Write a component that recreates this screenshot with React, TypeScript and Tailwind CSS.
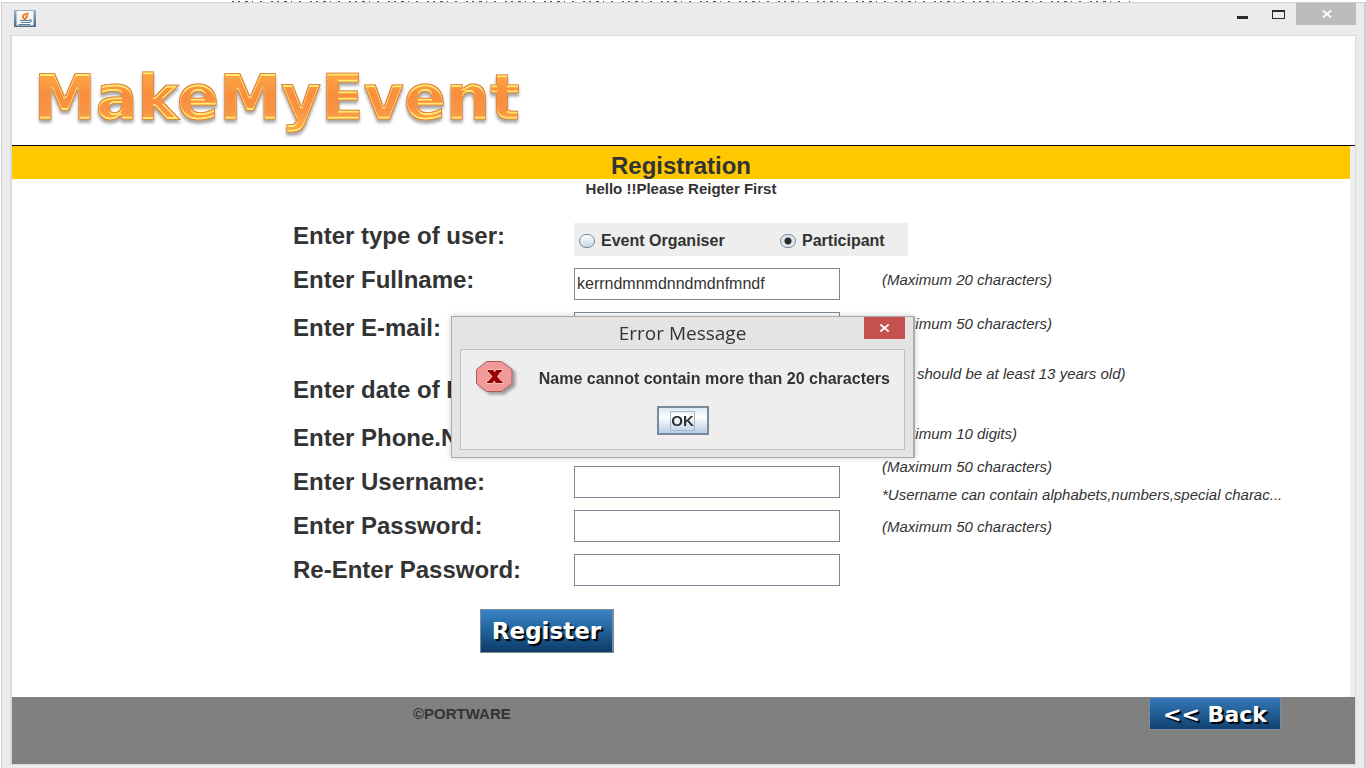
import React, { useState } from "react";

type Row = {
  id: string;
  label: string;
  type: string;
  value?: string;
  hints: string[];
  rowClass: string;
  labelClass: string;
  hintClass: string;
};

const rows: Row[] = [
  {
    id: "fullname",
    label: "Enter Fullname:",
    type: "text",
    value: "kerrndmnmdnndmdnfmndf",
    hints: ["(Maximum 20 characters)"],
    rowClass: "h-8",
    labelClass: "items-center pb-2",
    hintClass: "justify-center pb-2",
  },
  {
    id: "email",
    label: "Enter E-mail:",
    type: "email",
    hints: ["(Maximum 50 characters)"],
    rowClass: "h-8",
    labelClass: "items-center",
    hintClass: "justify-center pb-2",
  },
  {
    id: "birth",
    label: "Enter date of Birth:",
    type: "text",
    hints: ["(You should be at least 13 years old)"],
    rowClass: "h-[54px]",
    labelClass: "items-end pb-1.5",
    hintClass: "justify-start pt-2.5",
  },
  {
    id: "phone",
    label: "Enter Phone.No:",
    type: "tel",
    hints: ["(Maximum 10 digits)"],
    rowClass: "h-8",
    labelClass: "items-center",
    hintClass: "justify-center pb-2",
  },
  {
    id: "username",
    label: "Enter Username:",
    type: "text",
    hints: [
      "(Maximum 50 characters)",
      "*Username can contain alphabets,numbers,special charac...",
    ],
    rowClass: "h-8",
    labelClass: "items-center",
    hintClass: "justify-center gap-3 pb-0.5",
  },
  {
    id: "password",
    label: "Enter Password:",
    type: "password",
    hints: ["(Maximum 50 characters)"],
    rowClass: "h-8",
    labelClass: "items-center",
    hintClass: "justify-center pt-0.5",
  },
  {
    id: "repeat",
    label: "Re-Enter Password:",
    type: "password",
    hints: [],
    rowClass: "h-8",
    labelClass: "items-center",
    hintClass: "justify-center",
  },
];

function JavaIcon() {
  return (
    <svg width="22" height="17" viewBox="0 0 22 17" aria-hidden="true">
      <defs>
        <linearGradient id="cupFrame" x1="0" y1="0" x2="0" y2="1">
          <stop offset="0" stopColor="#9db3c8" />
          <stop offset="1" stopColor="#48667f" />
        </linearGradient>
      </defs>
      <rect width="22" height="17" rx="1" fill="url(#cupFrame)" />
      <rect x="2.5" y="1" width="17" height="14.5" fill="#f4f6f9" />
      <path d="M14.500 3.500C8 4.500 7.500 7 11 9.500M14 5.500C11.500 6.500 13 7.500 11 9.500" fill="none" stroke="#ee7f22" strokeWidth="1.900" />
      <path d="M6 10.500h9M7 12.500h8M4.500 14.500h12" stroke="#5b7f9f" strokeWidth="1" />
      <path d="M15 10c3-1 3 2 0 2.500" fill="none" stroke="#5b7f9f" strokeWidth="1.200" />
    </svg>
  );
}

function Cross({ size }: { size: number }) {
  return (
    <svg width={size} height="8" viewBox="0 0 10 8" aria-hidden="true">
      <path d="M0.800 0.500L9.200 7.500M9.200 0.500L0.800 7.500" stroke="#fff" strokeWidth="1.800" />
    </svg>
  );
}

function ErrorIcon() {
  return (
    <svg width="42" height="36" viewBox="0 0 42 36" aria-hidden="true">
      <defs>
        <filter id="signShadow" x="-20%" y="-20%" width="150%" height="150%">
          <feDropShadow dx="3" dy="2.500" stdDeviation="1.500" floodColor="#000" floodOpacity="0.350" />
        </filter>
      </defs>
      <path
        d="M10.500 0.500h15L36 8.500v14L25.500 30.500H10.500L0.500 22.500v-14z"
        fill="#f09a9a"
        stroke="#a85a5a"
        filter="url(#signShadow)"
      />
      <path
        d="M11 8.500h6.500l1.200 2L20 8.500h6.500V11H25l-3.500 4.500L25.500 20H27v2.500h-7.500l-1.200-2.500-1.800 2.500H10.500V20H12l4-4.500-4-4.500h-1z"
        fill="#990000"
        stroke="#ffc0c0"
        strokeWidth="1"
      />
    </svg>
  );
}

function Logo() {
  return (
    <>
      <svg width="0" height="0" className="absolute" aria-hidden="true">
        <filter id="bevel" x="-5%" y="-10%" width="110%" height="130%" colorInterpolationFilters="sRGB">
          <feMorphology in="SourceAlpha" operator="erode" radius="1" result="inner" />
          <feOffset in="inner" dy="2" result="down" />
          <feOffset in="inner" dy="-2" result="up" />
          <feComposite in="inner" in2="down" operator="out" result="topEdge" />
          <feComposite in="inner" in2="up" operator="out" result="bottomEdge" />
          <feMerge result="edges">
            <feMergeNode in="topEdge" />
            <feMergeNode in="bottomEdge" />
          </feMerge>
          <feGaussianBlur in="edges" stdDeviation="0.6" result="soft" />
          <feFlood floodColor="#fff06e" floodOpacity="0.95" />
          <feComposite in2="soft" operator="in" result="glint" />
          <feComposite in="glint" in2="inner" operator="in" result="glintIn" />
          <feGaussianBlur in="SourceAlpha" stdDeviation="1.8" />
          <feOffset dx="0" dy="3" result="far" />
          <feFlood floodColor="#000" floodOpacity="0.35" />
          <feComposite in2="far" operator="in" result="shade" />
          <feMerge>
            <feMergeNode in="shade" />
            <feMergeNode in="SourceGraphic" />
            <feMergeNode in="glintIn" />
          </feMerge>
        </filter>
      </svg>
      <h1 className="bg-[linear-gradient(180deg,#fda043_22%,#f98e3d_45%,#fa9344_68%,#fda548_82%)] bg-clip-text font-['DejaVu_Sans'] text-[62px] leading-[72px] font-bold text-transparent [filter:url(#bevel)] [-webkit-text-stroke:1px_#d98a48]">
        MakeMyEvent
      </h1>
    </>
  );
}

function Radio({ label, checked, onPick }: { label: string; checked: boolean; onPick: () => void }) {
  return (
    <label className="flex items-center gap-1.5 text-[16px] leading-5 font-bold">
      <input
        type="radio"
        name="userType"
        checked={checked}
        onChange={onPick}
        className="h-3.5 w-4 appearance-none rounded-full border border-[#7a8a99] bg-[linear-gradient(180deg,#ffffff,#c5d7e8)] checked:bg-[radial-gradient(circle,#2a2a2a_0_3px,#dbe6f0_4px)]"
      />
      {label}
    </label>
  );
}

export default function App() {
  const [userType, setUserType] = useState("participant");
  const [open, setOpen] = useState(true);

  return (
    <div className="flex min-h-screen flex-col bg-white font-['Liberation_Sans',sans-serif] text-[#333333]">
      <svg className="h-0.5 w-full" aria-hidden="true">
        <line x1="232" x2="1130" y1="1.500" y2="1.500" stroke="#4c5560" strokeDasharray="2 4 2 5 3 4 1 7 2 9" />
      </svg>
      <div className="ml-px flex flex-1 flex-col border-t border-r-2 border-l border-[#d0d0d0] bg-[#ebebeb] pr-2 pl-2">
        <header className="flex h-8 items-start justify-between">
          <div className="pt-[7px] pl-1">
            <JavaIcon />
          </div>
          <div className="flex items-start">
            <button type="button" aria-label="Minimize" className="flex h-[22px] w-9 items-center justify-center pt-1.5">
              <span className="h-[3px] w-[11px] bg-[#2a2a2a]" />
            </button>
            <button type="button" aria-label="Maximize" className="flex h-[22px] w-9 items-center justify-center">
              <span className="h-[9px] w-[13px] border border-t-2 border-[#2a2a2a]" />
            </button>
            <button type="button" aria-label="Close window" className="flex h-[22px] w-[60px] items-center justify-center bg-[#bcbcbc] pl-0.5">
              <Cross size={10} />
            </button>
          </div>
        </header>

        <main className="mb-[3px] flex flex-1 flex-col border border-l-2 border-[#dadada] bg-white">
          <div className="flex h-[110px] items-start border-b border-black pt-[26px] pl-[22px]">
            <Logo />
          </div>

          <form className="flex flex-1 flex-col border-r-[5px] border-[#eeeeee]" onSubmit={(e) => e.preventDefault()}>
            <h2 className="flex h-[33px] items-center justify-center bg-[#ffc800] pt-1.5 text-[24px] leading-7 font-bold">
              Registration
            </h2>
            <p className="text-center text-[15px] leading-5 font-bold">Hello !!Please Reigter First</p>

            <div className="mt-6 flex flex-col gap-3 pl-[281px]">
              <div className="grid h-[33px] grid-cols-[281px_334px_1fr] grid-rows-1">
                <span className="flex items-center pb-2 text-[24px] leading-7 font-bold">Enter type of user:</span>
                <div className="grid grid-cols-[201px_1fr] items-center bg-[#eeeeee] pt-0.5 pl-[5px]">
                  <Radio label="Event Organiser" checked={userType === "organiser"} onPick={() => setUserType("organiser")} />
                  <Radio label="Participant" checked={userType === "participant"} onPick={() => setUserType("participant")} />
                </div>
              </div>
              {rows.map((r) => (
                <div key={r.id} className={`grid grid-cols-[281px_308px_1fr] grid-rows-1 ${r.rowClass}`}>
                  <label htmlFor={r.id} className={`flex text-[24px] leading-7 font-bold whitespace-nowrap ${r.labelClass}`}>
                    {r.label}
                  </label>
                  <input
                    id={r.id}
                    type={r.type}
                    defaultValue={r.value}
                    className="h-8 w-[266px] self-center border border-[#7a8a99] bg-white px-0.5 text-[16px] outline-none"
                  />
                  <div className={`flex flex-col text-[15px] leading-4 whitespace-nowrap italic ${r.hintClass}`}>
                    {r.hints.map((h) => (
                      <p key={h}>{h}</p>
                    ))}
                  </div>
                </div>
              ))}
            </div>

            <div className="mt-[23px] mb-11 pl-[468px]">
              <button
                type="submit"
                className="h-11 w-[134px] border border-r-2 border-[#7a8a99] bg-[linear-gradient(180deg,#3a84c6,#23659f_45%,#0d3a68)] font-['DejaVu_Sans'] text-[23px] leading-7 font-bold text-white [text-shadow:2px_2px_1px_#000]"
              >
                Register
              </button>
            </div>
          </form>

          <footer className="flex h-[67px] items-start justify-between bg-[#808080] pr-[73px] pl-[401px]">
            <p className="pt-[7px] text-[15px] leading-5 font-bold">©PORTWARE</p>
            <button
              type="button"
              className="h-[33px] w-[133px] border border-r-2 border-[#7a8a99] bg-[linear-gradient(180deg,#3478b8,#114270)] pt-0.5 font-['DejaVu_Sans'] text-[22px] leading-7 font-bold text-white [text-shadow:2px_2px_1px_#000]"
            >
              &lt;&lt; Back
            </button>
          </footer>
        </main>
      </div>

      {open && (
        <div className="fixed inset-0 flex items-center justify-center pt-1.5">
          <section
            role="alertdialog"
            aria-labelledby="errorTitle"
            className="flex h-[142px] w-[464px] flex-col border border-r-2 border-[#ababab] bg-[#e4e4e4] px-2 pb-[7px] shadow-[0_0_6px_rgba(0,0,0,0.2)]"
          >
            <div className="grid h-8 grid-cols-[41px_1fr_41px] items-start">
              <h2 id="errorTitle" className="col-start-2 pt-1 text-center font-['Open_Sans'] text-[19px] leading-6">
                Error Message
              </h2>
              <button
                type="button"
                aria-label="Close"
                onClick={() => setOpen(false)}
                className="flex h-[22px] w-[41px] items-center justify-center bg-[#c75050]"
              >
                <Cross size={11} />
              </button>
            </div>
            <div className="flex flex-1 flex-col border border-[#c0c0c0] bg-[#eeeeee]">
              <div className="flex h-14 items-start justify-between pt-[11px] pr-3.5 pl-[15px]">
                <ErrorIcon />
                <p className="pt-2 text-[16px] leading-5 font-bold">Name cannot contain more than 20 characters</p>
              </div>
              <button
                type="button"
                onClick={() => setOpen(false)}
                className="flex h-[29px] w-[52px] items-center justify-center self-center border-2 border-[#7a8a99] bg-[linear-gradient(180deg,#dde8f3,#ffffff_35%,#b8cfe5)] text-[15px] leading-[18px] font-bold"
              >
                <span className="border border-[#a3b8cc]">OK</span>
              </button>
            </div>
          </section>
        </div>
      )}
    </div>
  );
}
